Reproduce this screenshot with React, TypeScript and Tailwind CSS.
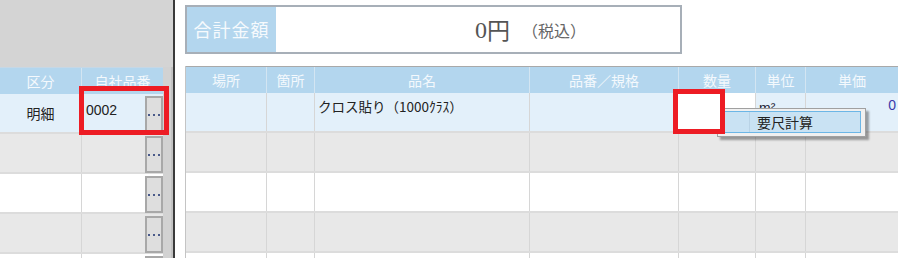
import React from "react";

const F = "font-['Noto_Sans_CJK_JP','Noto_Sans',sans-serif]";

function Dots() {
  return (
    <div className="flex gap-[3px] items-center">
      <span className="w-[2px] h-[2px] bg-[#4a5a8a]" />
      <span className="w-[2px] h-[2px] bg-[#4a5a8a]" />
      <span className="w-[2px] h-[2px] bg-[#4a5a8a]" />
    </div>
  );
}

function EllipsisBtn() {
  return (
    <div className="w-[18px] h-[37px] mt-[2px] bg-[#dedede] border-[2px] border-[#a8a8a8] flex items-center justify-center">
      <Dots />
    </div>
  );
}

const rowBgs = ["bg-[#e3f0fa]", "bg-[#e8e8e8]", "bg-white", "bg-[#e8e8e8]", "bg-white"];

const cols = [
  { label: "場所", w: "w-[80px]" },
  { label: "箇所", w: "w-[48px]" },
  { label: "品名", w: "w-[215px]" },
  { label: "品番／規格", w: "w-[149px]" },
  { label: "数量", w: "w-[77px]" },
  { label: "単位", w: "w-[50px]" },
  { label: "単価", w: "w-[93px]" },
];

export default function App() {
  return (
    <div className={`relative w-[899px] h-[258px] overflow-hidden bg-white flex ${F}`}>
      {/* Left panel */}
      <div className="w-[173px] h-full flex flex-col bg-[#d4d4d4]">
        <div className="h-[67px] shrink-0" />
        <div className="flex flex-1">
          <div className="w-[163px] flex flex-col">
            <div className="h-[27px] shrink-0 flex bg-[#b3d6ee] border-t border-[#c6d8e6] text-[14px] text-[#f4f9fd] leading-none">
              <div className="w-[81px] flex items-center justify-center">区分</div>
              <div className="w-[82px] flex items-center justify-center border-l border-[#d3e5f2]">自社品番</div>
            </div>
            {rowBgs.map((bg, i) => (
              <div key={i} className={`h-[40px] shrink-0 flex border-b-[2px] border-[#dcdcdc] ${bg}`}>
                <div className="w-[81px] flex items-center justify-center text-[14px] text-[#222]">
                  {i === 0 ? "明細" : ""}
                </div>
                <div className="w-[82px] flex border-l border-[#d6d6d6]">
                  <div className="flex-1 pl-[4px] pt-[7px] text-[14px] text-[#222] leading-[18px] font-['Liberation_Sans',sans-serif]">
                    {i === 0 ? "0002" : ""}
                  </div>
                  <EllipsisBtn />
                </div>
              </div>
            ))}
          </div>
          <div className="w-[10px] bg-[#d2d2d2] border-r-[2px] border-[#c2c2c2]" />
        </div>
      </div>
      <div className="w-[2px] h-full bg-[#3a3a3a]" />

      {/* Right panel */}
      <div className="flex-1 flex flex-col pl-[10px]">
        <div className="h-[5px] shrink-0" />
        <div className="w-[497px] h-[49px] shrink-0 border-[2px] border-[#a7afb8] flex">
          <div className="w-[89px] bg-[#b3d6ee] flex items-center justify-center text-[18px] tracking-[1px] text-[#f6fafd]">
            合計金額
          </div>
          <div className="flex-1 flex items-center pl-[199px] text-[#555]">
            <span className="text-[24px] leading-none font-['Liberation_Serif','Noto_Sans_CJK_JP',serif]">0</span>
            <span className="text-[23px] leading-none">円</span>
            <span className="ml-[12px] text-[16px] leading-none text-[#666]">（税込）</span>
          </div>
        </div>
        <div className="h-[12px] shrink-0" />
        <div className="w-[713px] flex flex-col border-l border-[#c4c4c4]">
          <div className="h-[27px] shrink-0 flex bg-[#b3d6ee] border-t border-[#a9a9a9] text-[14px] text-[#f4f9fd] leading-none">
            {cols.map((c, j) => (
              <div key={j} className={`${c.w} flex items-center justify-center ${j > 0 ? "border-l border-[#d3e5f2]" : ""}`}>
                {c.label}
              </div>
            ))}
          </div>
          {rowBgs.map((bg, i) => (
            <div key={i} className={`h-[40px] shrink-0 flex border-b-[2px] border-[#dcdcdc] ${bg}`}>
              {cols.map((c, j) => {
                let content: React.ReactNode = null;
                let extra = "";
                if (i === 0 && j === 2) {
                  content = (
                    <div className="pl-[3px] pt-[5px] text-[13.5px] text-[#222] leading-[16px] whitespace-nowrap">
                      クロス貼り（1000ｸﾗｽ）
                    </div>
                  );
                }
                if (i === 0 && j === 4) extra = "bg-white";
                if (i === 0 && j === 5) {
                  content = (
                    <div className="pl-[3px] pt-[7px] text-[14px] text-[#223] leading-[16px] font-['Liberation_Sans',sans-serif]">
                      m²
                    </div>
                  );
                }
                if (i === 0 && j === 6) {
                  content = (
                    <div className="pr-[2px] pt-[4px] text-right text-[14px] text-[#3a3aaa] leading-[16px] font-['Liberation_Sans',sans-serif]">
                      0
                    </div>
                  );
                }
                return (
                  <div key={j} className={`${c.w} ${j > 0 ? "border-l border-[#d6d6d6]" : ""} ${extra}`}>
                    {content}
                  </div>
                );
              })}
            </div>
          ))}
        </div>
      </div>

      {/* Context popup */}
      <div className="absolute left-[717px] top-[108px] w-[149px] h-[29px] bg-[#f0f0f0] border border-[#a0a0a0] shadow-[3px_3px_2px_rgba(0,0,0,0.35)]">
        <div className="absolute left-[4px] top-[2px] w-[139px] h-[22px] bg-[#c9e2f3] border border-[#6cb6e6] flex">
          <div className="w-[27px] border-r border-[#b9d3e6]" />
          <div className="pl-[7px] text-[14px] leading-[20px] text-[#222]">要尺計算</div>
        </div>
      </div>

      {/* Red highlight boxes */}
      <div className="absolute left-[79px] top-[86px] w-[90px] h-[49px] border-[5px] border-[#ed1c24]" />
      <div className="absolute left-[673px] top-[89px] w-[52px] h-[45px] border-[5px] border-[#ed1c24] bg-white" />
    </div>
  );
}
